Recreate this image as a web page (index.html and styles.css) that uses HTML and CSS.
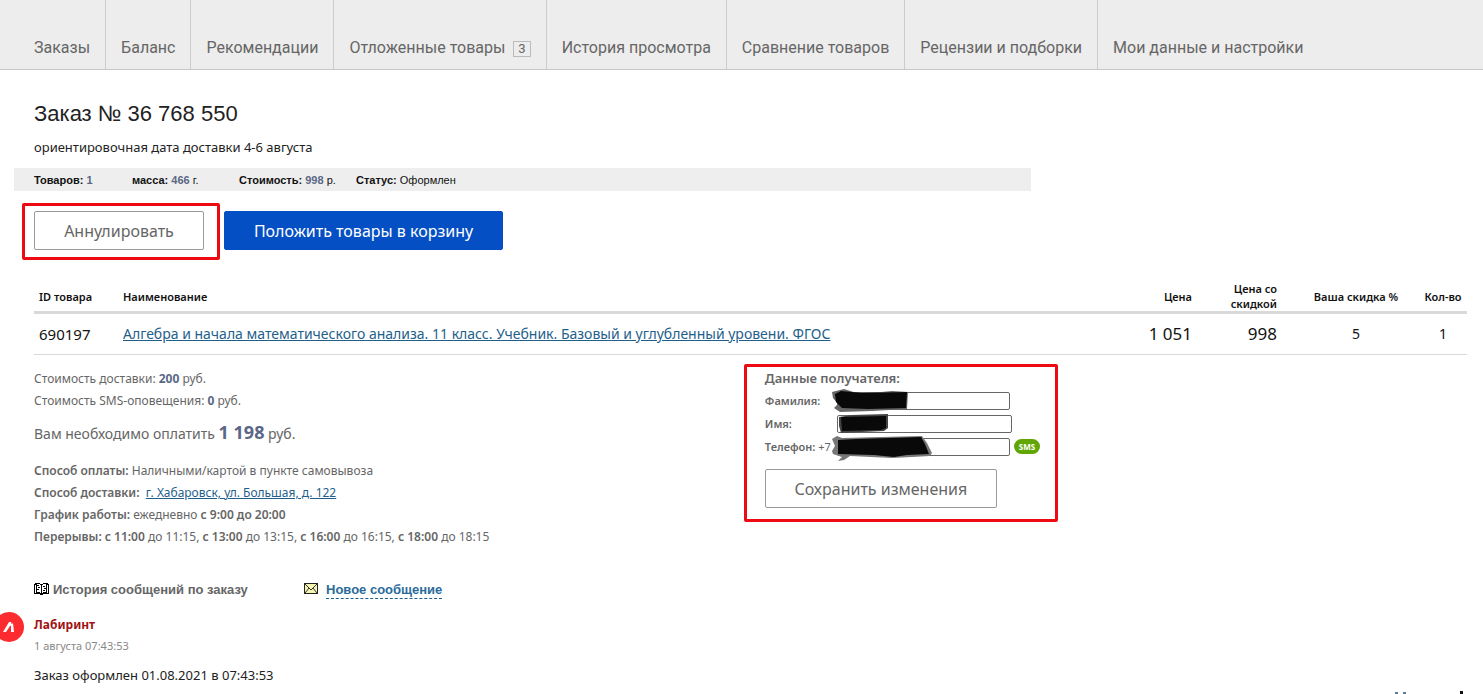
FILE: index.html
```html
<!DOCTYPE html>
<html lang="ru">
<head>
<meta charset="utf-8">
<meta name="viewport" content="width=device-width, initial-scale=1">
<title>Заказ № 36 768 550</title>
<link rel="stylesheet" href="styles.css">
</head>
<body>
<nav class="tabs">
  <a href="#">Заказы</a>
  <a href="#">Баланс</a>
  <a href="#">Рекомендации</a>
  <a href="#">Отложенные товары <span class="count">3</span></a>
  <a href="#">История просмотра</a>
  <a href="#">Сравнение товаров</a>
  <a href="#">Рецензии и подборки</a>
  <a href="#">Мои данные и настройки</a>
</nav>
<main class="page">
  <h1 class="title">Заказ № 36 768 550</h1>
  <p class="eta">ориентировочная дата доставки 4-6 августа</p>
  <div class="stats">
    <span class="stat stat-items"><b>Товаров:</b> <b class="num">1</b></span>
    <span class="stat stat-mass"><b>масса:</b> <b class="num">466</b> г.</span>
    <span class="stat stat-cost"><b>Стоимость:</b> <b class="num">998</b> р.</span>
    <span class="stat"><b>Статус:</b> Оформлен</span>
  </div>
  <div class="actions">
    <div class="marked marked-cancel"><button class="btn btn-cancel" type="button">Аннулировать</button></div>
    <button class="btn btn-primary" type="button">Положить товары в корзину</button>
  </div>
  <table class="goods">
    <thead>
      <tr>
        <th class="col-id">ID товара</th>
        <th class="col-name">Наименование</th>
        <th class="col-price">Цена</th>
        <th class="col-sale">Цена со<br>скидкой</th>
        <th class="col-discount">Ваша скидка %</th>
        <th class="col-qty">Кол-во</th>
      </tr>
    </thead>
    <tbody>
      <tr>
        <td class="col-id">690197</td>
        <td class="col-name"><a href="#">Алгебра и начала математического анализа. 11 класс. Учебник. Базовый и углубленный уровени. ФГОС</a></td>
        <td class="col-price">1 051</td>
        <td class="col-sale">998</td>
        <td class="col-discount">5</td>
        <td class="col-qty">1</td>
      </tr>
    </tbody>
  </table>
  <div class="details">
    <section class="summary">
      <p>Стоимость доставки: <b class="num">200</b> руб.</p>
      <p>Стоимость SMS-оповещения: <b class="num">0</b> руб.</p>
      <p class="total">Вам необходимо оплатить <b class="num">1 198</b> руб.</p>
      <p><b>Способ оплаты:</b> Наличными/картой в пункте самовывоза</p>
      <p><b>Способ доставки:</b> &nbsp;<a href="#">г. Хабаровск, ул. Большая, д. 122</a></p>
      <p><b>График работы:</b> ежедневно <b>с 9:00 до 20:00</b></p>
      <p><b>Перерывы: с 11:00</b> до 11:15, <b>с 13:00</b> до 13:15, <b>с 16:00</b> до 16:15, <b>с 18:00</b> до 18:15</p>
    </section>
    <form class="recipient marked">
      <h2>Данные получателя:</h2>
      <div class="field">
        <label for="surname">Фамилия:</label>
        <div class="entry">
          <input id="surname" type="text">
          <svg class="scribble" width="104" height="28" viewBox="0 0 104 28" aria-hidden="true"><path d="M0 4 12 1 28 6 60 3 76 4 75 21 40 23 8 24 2 20 6 16 1 10Z" fill="#666"/><path d="M3 6 9 3 30 5 75 4 74 20 36 21 10 20 4 14Z" fill="#090909"/></svg>
        </div>
      </div>
      <div class="field">
        <label for="name">Имя:</label>
        <div class="entry">
          <input id="name" class="wide" type="text">
          <svg class="scribble" width="104" height="28" viewBox="0 0 104 28" aria-hidden="true"><path d="M7 6 20 4 56 3 56 17 52 20 30 21 9 22 7 15Z" fill="#444"/><path d="M9 6 54 5 54 17 49 19 10 20Z" fill="#090909"/></svg>
        </div>
      </div>
      <div class="field">
        <label for="phone">Телефон: <span class="code">+7</span></label>
        <div class="entry">
          <input id="phone" type="tel">
          <svg class="scribble" width="104" height="28" viewBox="0 0 104 28" aria-hidden="true"><path d="M0 5 5 2 10 4 48 3 90 2 95 9 100 19 98 22 80 23 60 24 18 22 12 26 6 27 10 23 1 20 0 17 3 12Z" fill="#777"/><path d="M6 6 24 5 89 3 93 10 97 20 75 21 62 23 42 21 6 20Z" fill="#090909"/></svg>
        </div>
        <span class="sms">SMS</span>
      </div>
      <button class="btn btn-save" type="button">Сохранить изменения</button>
    </form>
  </div>
  <div class="thread-head">
    <h3 class="history">
      <svg width="15" height="15" viewBox="0 0 15 15" shape-rendering="crispEdges" aria-hidden="true"><path d="M1 0H6V1H9V0H14V1H15V11H9V12H6V11H0V1H1Z" fill="#000"/><path d="M1 2V10H2V2ZM3 1H6V2H7V10H6V9H3ZM9 1H12V9H9V10H8V2H9ZM13 2V10H14V2Z" fill="#fff"/><path d="M3 2H5V3H3ZM4 4H6V5H4ZM3 6H5V7H3ZM9 3H11V4H9ZM10 5H12V6H10ZM9 7H11V8H9Z" fill="#000"/></svg>
      История сообщений по заказу
    </h3>
    <svg width="15" height="14" viewBox="0 0 15 14" aria-hidden="true"><path d="M0 0H14V11H0Z" fill="#222"/><path d="M1 1H13V10H1Z" fill="#f4f3b0"/><path d="M1 1 7 7 13 1M1 10 5 5M13 10 9 5" fill="none" stroke="#333"/></svg>
    <a class="new-message" href="#">Новое сообщение</a>
  </div>
  <article class="message">
    <svg class="avatar" width="30" height="30" viewBox="0 0 30 30" aria-hidden="true"><circle cx="15" cy="15" r="15" fill="#fb2b2f"/><path d="M9 20 15 10H17L18 13 16 14 12 20ZM17 13 19 11 20 20H17Z" fill="#fff"/></svg>
    <h4>Лабиринт</h4>
    <time datetime="2021-08-01T07:43:53">1 августа 07:43:53</time>
    <p>Заказ оформлен 01.08.2021 в 07:43:53</p>
  </article>
</main>
<svg class="edge" width="70" height="3" viewBox="0 0 70 3" aria-hidden="true"><path d="M1 1H4V3H1ZM9 1H12V3H9Z" fill="#5d7c99"/><path d="M66 0H69V3H66Z" fill="#111"/></svg>
</body>
</html>
```

FILE: styles.css
```css
* { box-sizing: border-box; }

body {
  margin: 0;
  background: #fff;
  color: #222;
  font: 13px/22px "Noto Sans", "Open Sans", sans-serif;
}

h1, h2, h3, h4, p { margin: 0; }
a { color: #1f5f8b; }

.tabs {
  display: flex;
  height: 70px;
  padding-left: 19px;
  background: #ededed;
  border-bottom: 1px solid #c8c8c8;
}

.tabs a {
  padding: 36px 15px 0;
  border-right: 1px solid #ccc;
  color: #666;
  font: 16px/24px Roboto, sans-serif;
  text-decoration: none;
  white-space: nowrap;
}

.tabs a:last-child { border-right: 0; }

.count {
  display: inline-block;
  margin-left: 4px;
  padding: 0 4px;
  border: 1px solid #bbb;
  font-size: 13px;
  line-height: 14px;
}

.page { padding: 29px 16px 0 34px; }

.title {
  color: #222;
  font: 22px/30px "Liberation Sans", Arial, sans-serif;
}

.eta { padding: 7px 0 10px; }

.stats {
  display: flex;
  width: 71%;
  margin-left: -20px;
  padding: 1px 0 0 20px;
  background: #eee;
  color: #111;
  font: 11px/22px "Liberation Sans", Arial, sans-serif;
}

.stat-items { width: 98px; }
.stat-mass { width: 107px; }
.stat-cost { width: 117px; }
.num { color: #5b6786; }

.actions {
  display: flex;
  gap: 20px;
  padding-top: 20px;
}

.marked { position: relative; }

.marked::after {
  content: "";
  position: absolute;
  inset: -8px -16px -10px -12px;
  border: 3px solid #ee0a12;
  border-radius: 2px;
  pointer-events: none;
}

.btn {
  height: 39px;
  padding: 0 20px;
  border: 1px solid #999;
  border-radius: 2px;
  background: #fff;
  color: #666;
  font: 16px/24px "Noto Sans", "Open Sans", sans-serif;
  white-space: nowrap;
}

.btn-cancel { width: 170px; }

.btn-primary {
  width: 279px;
  border-color: #054fc4;
  background: #054fc4;
  color: #fff;
}

.goods {
  width: 100%;
  margin-top: 31px;
  border-collapse: collapse;
  table-layout: fixed;
  color: #111;
}

.goods th {
  height: 31px;
  padding: 0 5px;
  border-bottom: 3px solid #d9d9d9;
  font-size: 11px;
  font-weight: 600;
  line-height: 15px;
  text-align: left;
}

.goods td {
  height: 42px;
  padding: 0 5px;
  border-bottom: 1px solid #d9d9d9;
  font-size: 14px;
}

.col-id { width: 84px; }
.goods .col-price { width: 80px; text-align: right; }
.goods .col-sale { width: 96px; padding: 0 16px 0 20px; text-align: right; }
.goods .col-discount { width: 126px; text-align: center; }
.goods .col-qty { width: 48px; padding: 0; text-align: center; }
.goods td.col-id { font-size: 15px; }
.goods td.col-price, .goods td.col-sale { font-size: 17px; }

.details {
  display: grid;
  grid-template-columns: 51% 1fr;
  padding-top: 13px;
  color: #666;
}

.summary { font-size: 12px; }
.summary b { font-weight: 600; }

.summary .total {
  padding: 9px 0 15px;
  font-size: 14px;
}

.summary .num { font-weight: 700; }
.total .num { font-size: 18px; }

.recipient { justify-self: start; width: 276px; height: 140px; }
.recipient::after { inset: -4px -17px -14px -21px; }

.recipient h2 {
  font-size: 13px;
  font-weight: 600;
  line-height: 21px;
}

.field {
  display: flex;
  align-items: center;
  height: 23px;
}

.field label { width: 72px; font-size: 11px; font-weight: 600; white-space: nowrap; }
.code { font-weight: 400; }
.entry { position: relative; }

.entry input {
  display: block;
  width: 173px;
  height: 18px;
  border: 1px solid #666;
  border-radius: 2px;
  background: #fff;
}

.entry .wide { width: 175px; }

.scribble {
  position: absolute;
  top: -4px;
  left: -5px;
}

.sms {
  margin-left: 4px;
  padding: 0 5px;
  border-radius: 8px;
  background: #62a606;
  color: #fff;
  font-size: 8px;
  font-weight: 700;
  line-height: 15px;
}

.btn-save { width: 232px; margin-top: 11px; }

.thread-head {
  display: flex;
  align-items: center;
  padding-top: 32px;
  font: bold 13px/20px "Liberation Sans", Arial, sans-serif;
}

.history {
  display: flex;
  align-items: center;
  gap: 4px;
  width: 270px;
  color: #666;
  font: inherit;
}

.new-message {
  margin-left: 7px;
  border-bottom: 1px dashed #1f5f8b;
  color: #2a6b9c;
  line-height: 16px;
  text-decoration: none;
}

.message { position: relative; padding-top: 14px; }

.avatar {
  position: absolute;
  top: 12px;
  left: -40px;
}

.message h4 {
  color: #a01414;
  font-size: 12px;
  line-height: 22px;
}

.message time {
  display: block;
  color: #888;
  font-size: 11px;
  line-height: 20px;
}

.message p { padding-top: 8px; }
.edge { display: block; margin: 5px 19px 0 auto; }
```
